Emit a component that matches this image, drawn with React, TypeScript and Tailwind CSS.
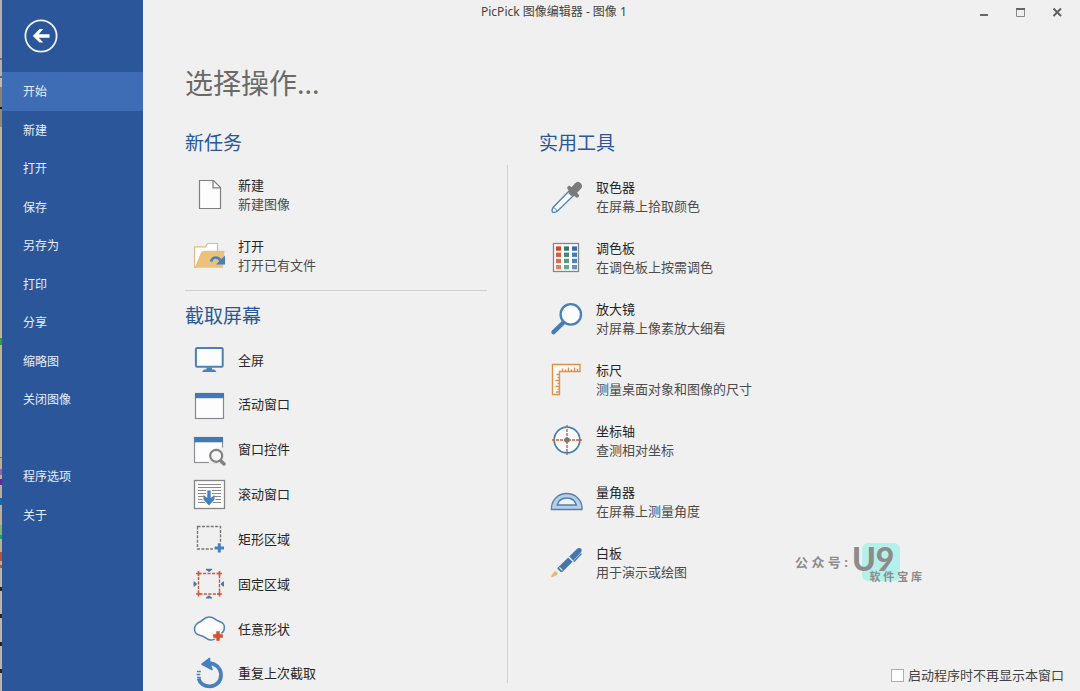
import React from "react";

const navItems: (string | null)[] = [
  "开始", "新建", "打开", "保存", "另存为", "打印", "分享", "缩略图", "关闭图像", null, "程序选项", "关于",
];

function Icon({ children }: { children: React.ReactNode }) {
  return (
    <svg viewBox="0 0 34 34" fill="none" className="size-[34px] shrink-0" aria-hidden="true">
      {children}
    </svg>
  );
}

const NewIcon = () => (
  <Icon>
    <path d="M7.5 2.5H21.5L28.5 9.5V30.5H7.5Z" fill="#fdfdfd" stroke="#7f7f7f" strokeWidth="1.2" />
    <path d="M21 2.5V9.8H28.5" stroke="#7f7f7f" strokeWidth="1.3" />
  </Icon>
);

const OpenIcon = () => (
  <Icon>
    <path d="M2.5 28.5V7.8H13.5L15.5 4.5H25.5V13H10L3.5 28.5Z" fill="#fefefe" stroke="#e2bc80" strokeWidth="1.2" />
    <path d="M9.5 13.5L12 11.8H32.5L31 28.8H3.5Z" fill="#ebc27c" />
    <path d="M19 22.5C20.5 17.6 25.8 17 28.8 21.8" stroke="#4880bd" strokeWidth="2.6" />
    <path d="M33 16.5V25.5H24Z" fill="#4880bd" />
  </Icon>
);

const ScreenIcon = () => (
  <Icon>
    <rect x="3.9" y="4.9" width="26.8" height="18.8" rx="1.2" fill="#fdfdfd" stroke="#4880bd" strokeWidth="2" />
    <path d="M14.5 24.5H20V26.5H22.5L24.5 29H10L12 26.5H14.5Z" fill="#4880bd" />
  </Icon>
);

const WindowIcon = () => (
  <Icon>
    <rect x="3.5" y="5.5" width="28" height="25" fill="#fdfdfd" stroke="#868a8e" strokeWidth="1.2" />
    <path d="M3 5H32V10.2H3Z" fill="#4278b6" />
  </Icon>
);

const ControlIcon = () => (
  <Icon>
    <rect x="2.5" y="4.5" width="28" height="25" fill="#fdfdfd" stroke="#8d8f92" strokeWidth="1.2" />
    <path d="M2 4H31V9.3H2Z" fill="#4278b6" />
    <path d="M17 30V20L24 14.5H31.5V30Z" fill="#f0f0f0" />
    <path d="M28.5 27.5L32 31" stroke="#828282" strokeWidth="3.4" strokeLinecap="round" />
    <circle cx="24.2" cy="22.8" r="6" fill="#f5f5f5" stroke="#828282" strokeWidth="2.2" />
  </Icon>
);

const ScrollIcon = () => (
  <Icon>
    <rect x="2.5" y="2.5" width="30" height="28" fill="#fdfdfd" stroke="#858585" strokeWidth="1.3" />
    <path d="M6 6.5H29M6 9.5H29M6 12.5H29M6 15.5H29M6 18.5H29M6 21.5H29M6 24.5H29" stroke="#8a8a8a" strokeWidth="1.2" />
    <path d="M17 12V23M12 18.5L17 24.5L22 18.5" stroke="#fdfdfd" strokeWidth="6" />
    <path d="M15.3 12.5H18.7V20L22.5 17V21.5L17 27.5L11.5 21.5V17L15.3 20Z" fill="#4880bd" />
  </Icon>
);

const RectIcon = () => (
  <Icon>
    <rect x="5.5" y="4.5" width="23" height="22.5" stroke="#777" strokeWidth="1.4" strokeDasharray="3 1.4" />
    <path d="M21 20.5H31V31H21Z" fill="#f0f0f0" />
    <path d="M27.3 21.2V30.6M22.6 25.9H32" stroke="#4880bd" strokeWidth="3" />
  </Icon>
);

const FixedIcon = () => (
  <Icon>
    <rect x="6.5" y="6.5" width="21" height="20.5" stroke="#d6583c" strokeWidth="1.4" strokeDasharray="3.2 1.3" />
    <path
      d="M4 6.5H9M6.5 4V9M25 6.5H30M27.5 4V9M4 27H9M6.5 24.5V29.5M25 27H30M27.5 24.5V29.5"
      stroke="#d6583c"
      strokeWidth="1.6"
    />
    <path
      d="M14 1.8H20V3L17 5L14 3ZM14 31.5H20V30.5L17 28.2L14 30.5ZM1.5 14.5H2.5L5.2 17L2.5 19.5H1.5ZM32 14.5H31L28.5 17L31 19.5H32Z"
      fill="#4278b6"
    />
  </Icon>
);

const FreeIcon = () => (
  <Icon>
    <path
      d="M2.5 17.5C2.3 13.5 4 11.5 8.5 9.5C11.5 8 12 5.2 17 4.9C22 4.8 22.5 7.5 27.5 9.5C31.5 11 32.6 12.5 32.3 16.5C32 21 29.5 21.5 27.5 23C25 25 22.5 28.5 18.5 28C14.5 27.5 14 24.8 8.5 23.5C4.5 22.6 2.7 21 2.5 17.5Z"
      fill="#fdfdfd"
      stroke="#4c82b8"
      strokeWidth="1.5"
    />
    <path d="M26 18.5V29.5M20.5 24H31.5" stroke="#f0f0f0" strokeWidth="5" />
    <path d="M26 19.2V28.8M21.2 24H30.8" stroke="#d6512f" strokeWidth="3.4" />
  </Icon>
);

const RepeatIcon = () => (
  <Icon>
    <path d="M14 6.8C22 4.5 29 10.5 29 18C29 24.8 24 29.3 17.7 29.3C12 29.3 7.8 26 6.6 21.5" stroke="#4880bd" strokeWidth="3.8" />
    <path d="M10 7.2L17.5 1.5V5.5L20 12.5Z" fill="#4880bd" stroke="#4880bd" strokeWidth="1.6" strokeLinejoin="round" />
    <path d="M5 14.5H8.8M4.6 17.5H8.3M5 20.5H8.8" stroke="#4880bd" strokeWidth="1.6" />
  </Icon>
);

const PickerIcon = () => (
  <Icon>
    <path d="M20.8 9.2L25.3 13.8L7.3 31.2C5.5 32.2 4 32.5 2.5 32.2C1.7 31 2 29.3 3 27.5Z" fill="#fbfcfd" stroke="#4a83bf" strokeWidth="1.3" />
    <path d="M3.5 28C5.5 28 6.5 29.5 6.5 31.2" stroke="#4a83bf" />
    <path d="M19.2 7.8L27 15.6" stroke="#7b7b7b" strokeWidth="4" strokeLinecap="round" />
    <path d="M22.5 12L28 6" stroke="#7b7b7b" strokeWidth="7.8" strokeLinecap="round" />
  </Icon>
);

const swatches: string[][] = [
  ["#cf4423", "#327765", "#3569aa"],
  ["#d85a3c", "#458571", "#477bb8"],
  ["#db6f55", "#579b82", "#5582b3"],
  ["#e07f66", "#66a88f", "#648fbf"],
];

const PaletteIcon = () => (
  <Icon>
    <rect x="3.5" y="2.5" width="25" height="28" fill="#fbfbfb" stroke="#858585" strokeWidth="1.3" />
    {swatches.map((row, r) =>
      row.map((color, c) => <rect key={color} x={6 + c * 8} y={5.4 + r * 6.2} width="5" height="4.3" fill={color} />),
    )}
  </Icon>
);

const MagnifierIcon = () => (
  <Icon>
    <path d="M3.5 30.2L14 20" stroke="#4a7cb0" strokeWidth="4.4" strokeLinecap="round" />
    <circle cx="20.8" cy="12.4" r="10.2" fill="#fcfdfe" stroke="#4a80b7" strokeWidth="2.3" />
  </Icon>
);

const RulerIcon = () => (
  <Icon>
    <path d="M2.5 1.5H30V8.5H9.5V31.5H2.5Z" fill="#fdf9f5" stroke="#dd914e" strokeWidth="1.4" />
    <path
      d="M12.5 8V5.5M15.5 8V6.5M18.5 8V4.5M21.5 8V6.5M24.5 8V4.5M27.5 8V6M9 11.5H6.5M9 14.5H7.5M9 17.5H5.5M9 20.5H7.5M9 23.5H5.5M9 26.5H7.5M9 29H6"
      stroke="#dd914e"
      strokeWidth="1.4"
    />
  </Icon>
);

const AxisIcon = () => (
  <Icon>
    <circle cx="17" cy="16" r="12.8" fill="#fdfdfd" stroke="#4a7eae" strokeWidth="1.7" />
    <path d="M17 1V31M2 16H32" stroke="#d9593c" strokeWidth="1.4" strokeDasharray="3 1" />
    <circle cx="17" cy="16" r="2.7" fill="#777" />
  </Icon>
);

const ProtractorIcon = () => (
  <Icon>
    <path
      fillRule="evenodd"
      d="M1.5 24.5V22C2.2 14.5 8.5 8.5 16.7 8.5C25 8.5 31.3 14.5 32 22V24.5ZM7.2 20H26.4C25.2 15.6 21.8 13 16.8 13C11.8 13 8.4 15.6 7.2 20Z"
      fill="#b4cfea"
      stroke="#557fa8"
      strokeWidth="1.3"
    />
  </Icon>
);

const PenIcon = () => (
  <Icon>
    <path d="M1 31.2C2 28 3.4 26.4 5.5 25L8 27.5C6.2 29.8 4.2 30.8 1 31.2Z" fill="#e5b873" />
    <path d="M7.5 22L18.2 11.5L22.5 15.8L12 26.2L10.4 25.8L7.5 23Z" fill="#4577ac" />
    <path d="M19.2 10.5L27.4 2.6C28.8 1.5 30.5 1.8 31.3 2.8C32 4 31.8 5.4 30.7 6.6L23.4 14.7Z" fill="#4577ac" />
    <path d="M31.5 7.5L23.8 15.7" stroke="#4577ac" strokeWidth="1.3" />
    <path d="M9.5 21.5L12.4 24.4" stroke="#f0f0f0" strokeWidth="1.1" />
  </Icon>
);

const tasks = [
  { title: "新建", note: "新建图像", icon: <NewIcon /> },
  { title: "打开", note: "打开已有文件", icon: <OpenIcon /> },
];

const captures = [
  { title: "全屏", icon: <ScreenIcon /> },
  { title: "活动窗口", icon: <WindowIcon /> },
  { title: "窗口控件", icon: <ControlIcon /> },
  { title: "滚动窗口", icon: <ScrollIcon /> },
  { title: "矩形区域", icon: <RectIcon /> },
  { title: "固定区域", icon: <FixedIcon /> },
  { title: "任意形状", icon: <FreeIcon /> },
  { title: "重复上次截取", icon: <RepeatIcon /> },
];

const tools = [
  { title: "取色器", note: "在屏幕上拾取颜色", icon: <PickerIcon /> },
  { title: "调色板", note: "在调色板上按需调色", icon: <PaletteIcon /> },
  { title: "放大镜", note: "对屏幕上像素放大细看", icon: <MagnifierIcon /> },
  { title: "标尺", note: "测量桌面对象和图像的尺寸", icon: <RulerIcon /> },
  { title: "坐标轴", note: "查测相对坐标", icon: <AxisIcon /> },
  { title: "量角器", note: "在屏幕上测量角度", icon: <ProtractorIcon /> },
  { title: "白板", note: "用于演示或绘图", icon: <PenIcon /> },
];

function Action({ title, note, icon }: { title: string; note?: string; icon: React.ReactNode }) {
  return (
    <button type="button" className="flex items-center gap-3 text-left text-[13px] leading-[19px] text-[#262626]">
      {icon}
      <span className="flex flex-col">
        <span>{title}</span>
        {note && <span className="text-[#4c4c4c]">{note}</span>}
      </span>
    </button>
  );
}

function Heading({ children }: { children: React.ReactNode }) {
  return <h2 className="text-[19px] leading-7 text-[#2b579a]">{children}</h2>;
}

export default function App() {
  return (
    <div className="relative flex min-h-screen bg-[#f0f0f0] font-['Noto_Sans','Noto_Sans_CJK_SC',sans-serif]">
      <div className="w-0.5 shrink-0 bg-[linear-gradient(#b5b1aa_0_58px,#77736c_58px_60px,#b5b1aa_60px_76px,#69665d_76px_78px,#c0b8a8_78px_87px,#8b8372_87px_107px,#1c1a18_107px_109px,#918a78_109px_127px,#c0b498_127px_338px,#359a42_338px_345px,#c0b498_345px_457px,#756d60_457px_458px,#b9ae97_458px_469px,#9a63a5_469px_475px,#b9ae97_475px_479px,#7122a0_479px_485px,#b9ae97_485px_498px,#176b9f_498px_505px,#b9ae97_505px_525px,#79b779_525px_535px,#20a077_535px_539px,#b9ae97_539px_552px,#b95639_552px_561px,#b9ae97_561px_565px,#ad5550_565px_568px,#bcb5a8_568px_587px,#29251f_587px_591px,#bcb5a8_591px_614px,#29251f_614px_618px,#bcb5a8_618px_642px,#29251f_642px_646px,#bcb5a8_646px_669px,#29251f_669px_673px,#bcb5a8_673px)]" />
      <aside className="flex w-[141px] shrink-0 flex-col bg-[#2b579a]">
        <div className="flex h-[72px] items-center pl-[22px]">
          <button type="button" aria-label="返回">
            <svg viewBox="0 0 34 34" fill="none" className="size-[34px]" aria-hidden="true">
              <circle cx="17" cy="17" r="15.6" stroke="#eef3fa" strokeWidth="1.8" />
              <path d="M8.8 17L15.5 10H19.3L14.7 15.2H25.5V18.8H14.7L19.3 23.6H15.5Z" fill="#fff" />
            </svg>
          </button>
        </div>
        <nav className="grid h-[462px] auto-rows-fr text-xs text-[#e6edf7]">
          {navItems.map((label, i) =>
            label ? (
              <button
                key={label}
                type="button"
                aria-current={i === 0 ? "page" : undefined}
                className={i === 0 ? "bg-[#3e6db5] pt-0.5 pl-[21px] text-left" : "pt-0.5 pl-[21px] text-left"}
              >
                {label}
              </button>
            ) : (
              <span key="gap" />
            ),
          )}
        </nav>
      </aside>

      <div className="flex min-w-0 flex-1 flex-col">
        <header className="flex h-6 items-center justify-between pr-4 pl-[338px]">
          <p className="text-xs text-[#444]">PicPick 图像编辑器 - 图像 1</p>
          <div className="flex gap-6">
            <button type="button" aria-label="最小化">
              <svg viewBox="0 0 13 13" fill="none" className="size-[13px]" aria-hidden="true">
                <path d="M3 9H11" stroke="#666" strokeWidth="2" />
              </svg>
            </button>
            <button type="button" aria-label="最大化">
              <svg viewBox="0 0 13 13" fill="none" className="size-[13px]" aria-hidden="true">
                <path d="M2.5 3V10.5H10.5V3" stroke="#888" />
                <path d="M2 3H11" stroke="#666" strokeWidth="2" />
              </svg>
            </button>
            <button type="button" aria-label="关闭">
              <svg viewBox="0 0 13 13" fill="none" className="size-[13px]" aria-hidden="true">
                <path d="M2.5 2.5L10 10M10 2.5L2.5 10" stroke="#606060" strokeWidth="2" />
              </svg>
            </button>
          </div>
        </header>

        <main className="flex flex-1 flex-col pl-[42px]">
          <h1 className="mt-[39px] text-[28px] leading-10 text-[#6a6a66]">选择操作...</h1>
          <div className="mt-[26px] flex flex-1">
            <div className="flex w-[302px] shrink-0 flex-col">
              <Heading>新任务</Heading>
              <div className="mt-[19px] flex flex-col gap-[23px] border-b border-[#cfcfcf] pb-[15px] pl-[7px]">
                {tasks.map((t) => (
                  <Action key={t.title} {...t} />
                ))}
              </div>
              <div className="mt-[11px]">
                <Heading>截取屏幕</Heading>
              </div>
              <div className="mt-[13px] flex flex-1 flex-col justify-between pl-[7px]">
                {captures.map((c) => (
                  <Action key={c.title} {...c} />
                ))}
              </div>
            </div>
            <div className="mt-9 mr-[31px] mb-2 ml-5 w-px shrink-0 bg-[#cfcfcf]" />
            <div className="flex flex-1 flex-col">
              <Heading>实用工具</Heading>
              <div className="mt-[21px] flex flex-col gap-[23px] pl-[11px]">
                {tools.map((t) => (
                  <Action key={t.title} {...t} />
                ))}
              </div>
              <label className="mt-auto mr-4 mb-[6px] flex items-center gap-1 self-end text-[13px] leading-5 text-[#444]">
                <input type="checkbox" className="size-[13px] appearance-none border border-[#adadad] bg-white checked:bg-[#2b579a]" />
                启动程序时不再显示本窗口
              </label>
            </div>
          </div>
        </main>
      </div>

      <div className="absolute right-[158px] bottom-[104px] flex h-11 w-[127px] font-bold text-[#8c8c8c]">
        <span className="pt-[9px] text-[13px] leading-5 whitespace-nowrap">公 众 号 :</span>
        <span className="absolute top-0 left-[67px] size-[38px] rounded-md bg-[#b5f0ea]" />
        <span className="absolute top-1 left-[57px] font-['Lato','Noto_Sans',sans-serif] text-[32px] leading-6 font-black">U9</span>
        <span className="absolute right-0 bottom-1 text-[11px] leading-3 whitespace-nowrap">软 件 宝 库</span>
      </div>
    </div>
  );
}
